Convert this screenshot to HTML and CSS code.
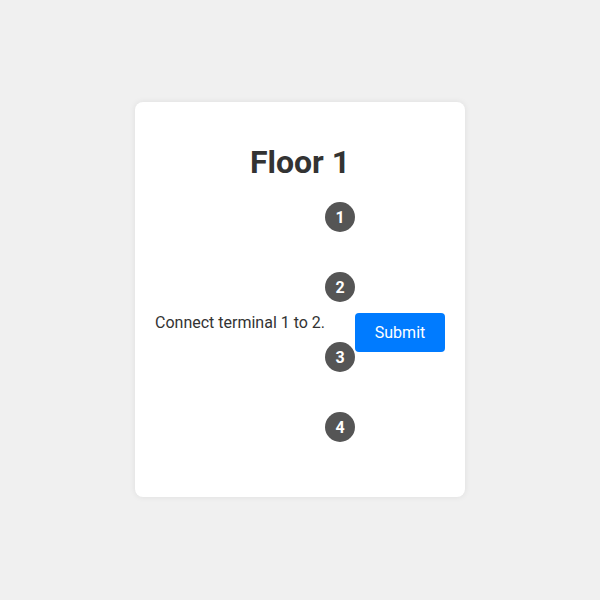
FILE: index.html
```html
<!DOCTYPE html>
<html>
<head>
<meta charset="utf-8">
<link rel="stylesheet" href="styles.css">
</head>
<body>
<div class="page">
  <div class="card">
    <h1 class="title">Floor 1</h1>
    <div class="row">
      <p class="task">Connect terminal 1 to 2.</p>
      <div class="terminals">
        <div class="terminal">1</div>
        <div class="terminal">2</div>
        <div class="terminal">3</div>
        <div class="terminal">4</div>
      </div>
      <button class="submit">Submit</button>
    </div>
  </div>
</div>
</body>
</html>
```
FILE: styles.css
```css
html, body {
  margin: 0;
  padding: 0;
  background: #f0f0f0;
  font-family: Roboto, "Liberation Sans", sans-serif;
  color: #333;
}
.page {
  width: 600px;
  height: 600px;
  display: flex;
  justify-content: center;
  padding-top: 102px;
  box-sizing: border-box;
}
.card {
  width: 330px;
  height: 395px;
  box-sizing: border-box;
  background: #fff;
  border-radius: 8px;
  box-shadow: 0 0 6px rgba(0,0,0,0.08);
  padding: 20px;
}
.title {
  margin: 21px 0 21px;
  font-size: 32px;
  line-height: 38px;
  font-weight: 700;
  text-align: center;
  color: #333;
}
.row {
  display: flex;
  align-items: center;
}
.task {
  margin: 0;
  flex: 1;
  white-space: nowrap;
  font-size: 16px;
  line-height: 19px;
  color: #333;
}
.terminals {
  display: flex;
  flex-direction: column;
  gap: 40px;
}
.terminal {
  width: 30px;
  height: 30px;
  border-radius: 50%;
  background: #555;
  color: #fff;
  font-weight: 700;
  font-size: 16px;
  display: flex;
  align-items: center;
  justify-content: center;
}
.submit {
  margin-top: 20px;
  width: 90px;
  height: 39px;
  border: none;
  border-radius: 4px;
  background: #007bff;
  color: #fff;
  font-family: Roboto, "Liberation Sans", sans-serif;
  font-size: 16px;
  padding: 0;
}
```
